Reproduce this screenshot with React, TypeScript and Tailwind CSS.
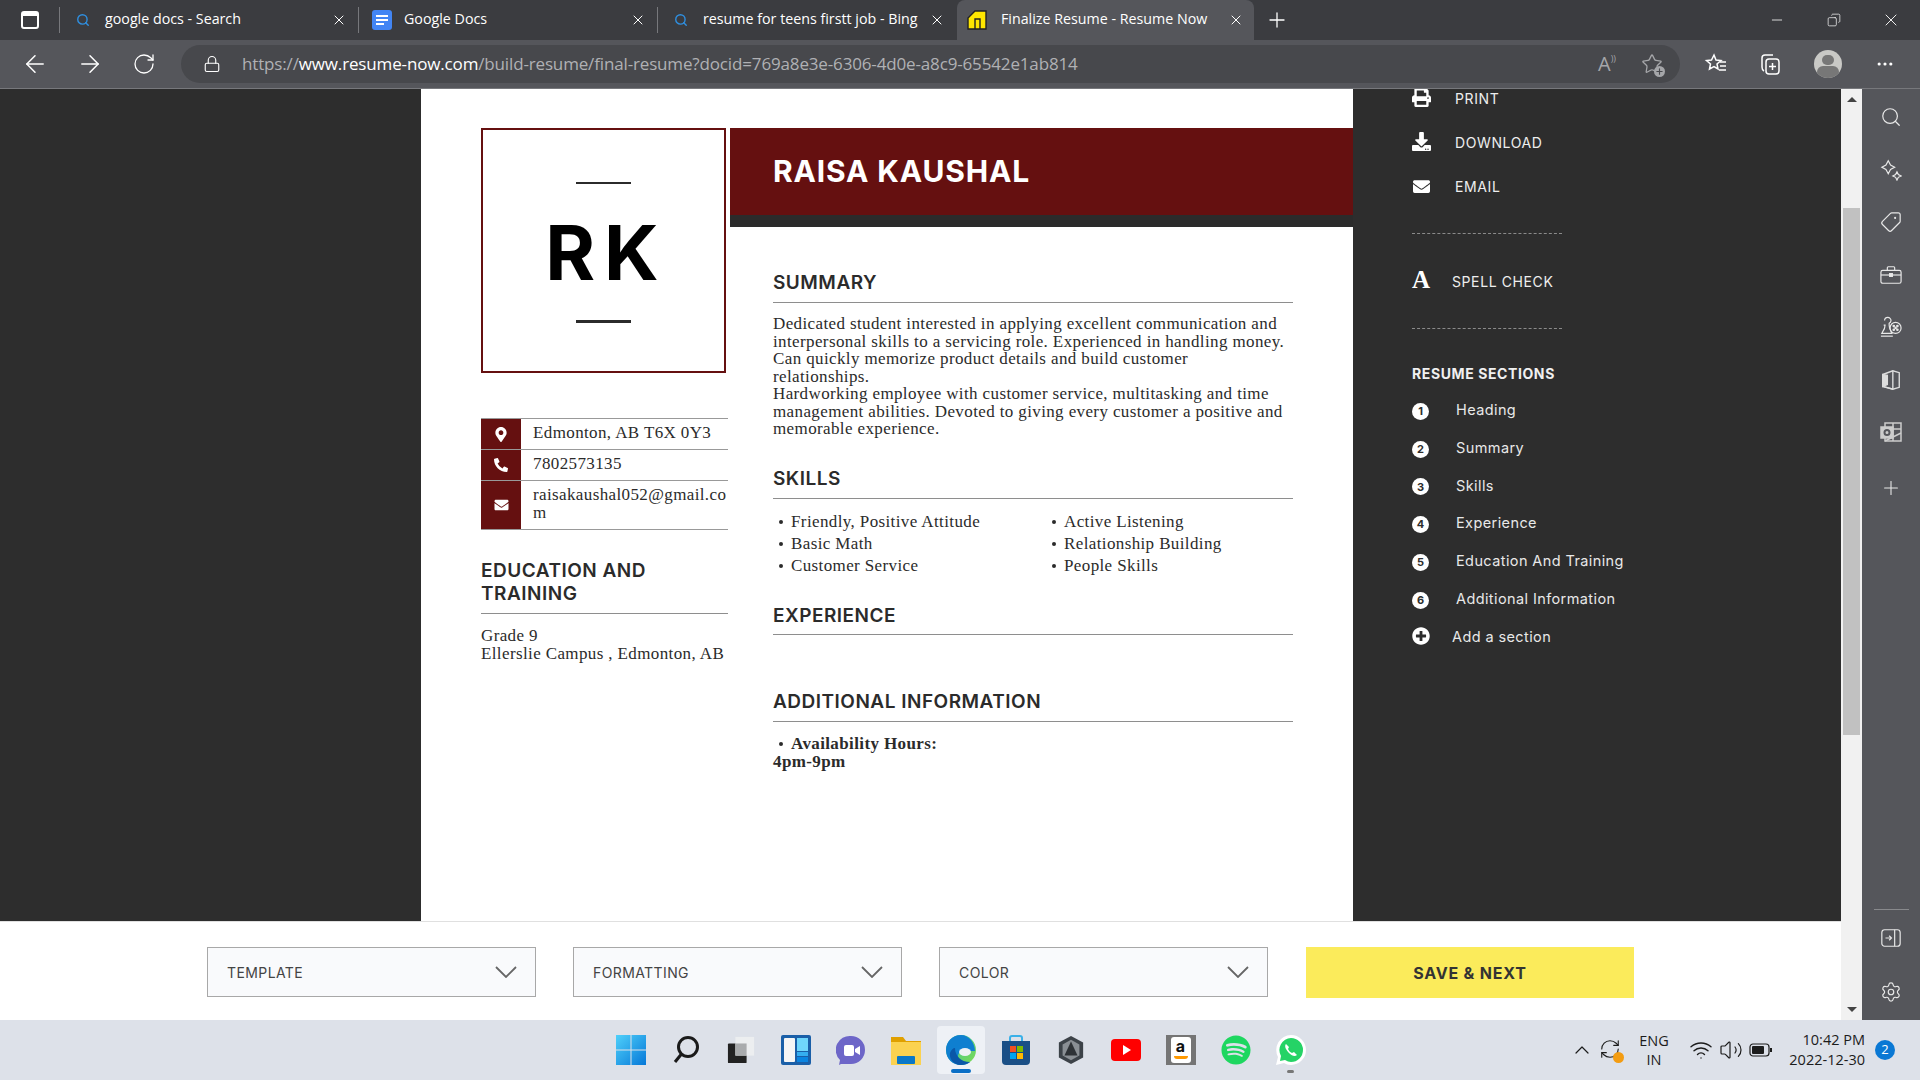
import { ArrowLeft, ArrowRight, RotateCw, Lock, X, Plus, Minus, Copy, Search, Tag, ChevronUp, Settings, Star, Wifi, Volume2, MoreHorizontal, RefreshCw } from 'lucide-react';
import { FaMapMarkerAlt, FaPhoneAlt, FaEnvelope, FaPrint, FaDownload, FaPlusCircle, FaSpotify } from 'react-icons/fa';

const serif = "font-['Liberation_Serif',serif]";
const body = "text-[17px] leading-[17.5px] tracking-[0.38px] text-[#2b2b2b] font-['Liberation_Serif',serif]";
const ui = "font-['Open_Sans',sans-serif]";
const head = "font-['Inter',sans-serif]";

function TabIcon({ kind }: { kind: string }) {
  if (kind === 'search') return <Search className="w-[14px] h-[14px] text-[#2f8fe0]" strokeWidth={2.4} />;
  if (kind === 'docs') {
    return (
      <div className="w-5 h-5 rounded-[3px] bg-[#4285f4] flex flex-col justify-center gap-[2px] px-1">
        <div className="h-[2px] bg-white" />
        <div className="h-[2px] bg-white" />
        <div className="h-[2px] bg-white w-2" />
      </div>
    );
  }
  return (
    <svg viewBox="0 0 20 20" className="w-5 h-5">
      <path d="M1 19V8l7-7h11v18z" fill="#ffe600" stroke="#222" strokeWidth="1.4" />
      <path d="M8 19V9h5v10" fill="none" stroke="#222" strokeWidth="1.4" />
    </svg>
  );
}

function Tab({ title, icon, active, divider }: { title: string; icon: string; active?: boolean; divider?: boolean }) {
  return (
    <div className={active ? 'w-[297px] h-10 flex items-center pl-[10px] pr-[10px] bg-[#55565b] rounded-t-lg' : 'w-[299px] h-10 flex items-center pl-[13px] pr-[12px] relative'}>
      <div className="w-[20px] shrink-0 flex justify-center"><TabIcon kind={icon} /></div>
      <div className={active ? 'ml-[14px] mr-[8px] -mt-[2px] flex-1' : 'ml-[12px] mr-[12px] -mt-[2px] flex-1'}>
        <div className={`whitespace-nowrap text-[14.25px] text-white ${ui}`}>{title}</div>
      </div>
      <X className="w-4 h-4 shrink-0 text-white" strokeWidth={1.5} />
      {divider && <div className="absolute right-0 top-[7px] w-px h-[26px] bg-[#77787c]" />}
    </div>
  );
}

function TabStrip() {
  return (
    <div className="h-10 bg-[#3b3c40] flex items-center">
      <div className="w-[60px] h-10 flex items-center justify-center relative">
        <div className="w-[18px] h-[18px] border-2 border-white rounded-[3px] border-t-[5px]" />
        <div className="absolute right-0 top-[7px] w-px h-[26px] bg-[#77787c]" />
      </div>
      <Tab title="google docs - Search" icon="search" divider />
      <Tab title="Google Docs" icon="docs" divider />
      <Tab title="resume for teens firstt job - Bing" icon="search" />
      <Tab title="Finalize Resume - Resume Now" icon="site" active />
      <Plus className="ml-[11px] w-6 h-6 text-white" strokeWidth={1.3} />
      <div className="ml-auto flex items-center text-white">
        <div className="w-[57px] flex justify-center"><Minus className="w-4 h-4" strokeWidth={1.2} /></div>
        <div className="w-[57px] flex justify-center"><Copy className="w-[14px] h-[14px] -scale-x-100" strokeWidth={1.2} /></div>
        <div className="w-[58px] flex justify-center"><X className="w-5 h-5" strokeWidth={1.1} /></div>
      </div>
    </div>
  );
}

function Toolbar() {
  return (
    <div className="h-[49px] bg-[#55565b] border-b border-[#77787c] flex items-center text-white">
      <div className="w-[181px] pl-[21px] flex items-center">
        <ArrowLeft className="w-7 h-7" strokeWidth={1.3} />
        <ArrowRight className="ml-[27px] w-7 h-7" strokeWidth={1.3} />
        <RotateCw className="ml-[28px] w-6 h-6" strokeWidth={1.3} />
      </div>
      <div className="w-[1499px] h-[38px] bg-[#47484c] rounded-[19px] flex items-center pl-[22px] pr-[17px]">
        <Lock className="w-[18px] h-[18px]" strokeWidth={1.5} />
        <div className={`ml-[21px] -mt-[1px] text-[17px] whitespace-nowrap text-[#b0b1b4] tracking-[-0.15px] ${ui}`}>
          https://<span className="text-white">www.resume-now.com</span>/build-resume/final-resume?docid=769a8e3e-6306-4d0e-a8c9-65542e1ab814
        </div>
        <div className="ml-auto flex items-center gap-[25px] text-[#a5a6a9]">
          <span className={`text-[20px] leading-none ${ui}`}>A<span className="text-[9px] align-top">))</span></span>
          <div className="relative">
            <Star className="w-[22px] h-[22px]" strokeWidth={1.4} />
            <div className="absolute right-[-2px] bottom-[-2px] w-[11px] h-[11px] rounded-full bg-[#a5a6a9] flex items-center justify-center">
              <Plus className="w-[9px] h-[9px] text-[#47484c]" strokeWidth={3} />
            </div>
          </div>
        </div>
      </div>
      <svg viewBox="0 0 24 24" className="ml-[24px] w-6 h-6" fill="none" stroke="white" strokeWidth="1.5">
        <path d="M10 3l2 5 5 .5-4 3.5 1 5-4-2.5L5.5 17l1-5-4-3.5L7.5 8z" />
        <path d="M16 10h6M16 14h6M15 18h7" />
      </svg>
      <svg viewBox="0 0 24 24" className="ml-[30px] w-6 h-6" fill="none" stroke="white" strokeWidth="1.5">
        <path d="M6 19c-2-1-2-2-2-4V6c0-2 1-3 3-3h8" />
        <rect x="8" y="7" width="13" height="15" rx="3" />
        <path d="M14.5 11v7M11 14.5h7" />
      </svg>
      <div className="ml-[32px] w-7 h-7 rounded-full bg-[#c9c9c6] overflow-hidden flex flex-col items-center pt-[5px]">
        <div className="w-[12px] h-[12px] rounded-full bg-[#777]" />
        <div className="w-[22px] h-[14px] rounded-full bg-[#777] mt-[1px]" />
      </div>
      <MoreHorizontal className="ml-[33px] w-5 h-5" strokeWidth={1.8} />
    </div>
  );
}

function ContactRow({ icon, children, tall }: { icon: React.ReactNode; children: React.ReactNode; tall?: boolean }) {
  return (
    <div className={tall ? 'flex h-[49px] border-b border-[#999]' : 'flex h-[31px] border-b border-[#999]'}>
      <div className="w-10 shrink-0 bg-[#651010] flex items-center justify-center text-white">{icon}</div>
      <div className={`pl-[12px] pt-[5px] break-all ${body}`}>{children}</div>
    </div>
  );
}

function Heading({ children, className }: { children: React.ReactNode; className: string }) {
  return (
    <div className={`border-b border-[#8e8e8e] font-semibold text-[19px] leading-[23px] text-[#2b2b2b] tracking-[0.5px] ${head} ${className}`}>
      {children}
    </div>
  );
}

function Bullet({ children }: { children: React.ReactNode }) {
  return (
    <div className="flex items-center h-[22px]">
      <span className="w-[4px] h-[4px] rounded-full bg-[#2b2b2b] ml-[6px] mr-[8px]" />
      {children}
    </div>
  );
}

function Resume() {
  return (
    <div className="w-[932px] h-full bg-white flex shrink-0">
      <div className="w-[309px] pl-[60px] pt-[39px] pr-[2px]">
        <div className="w-[245px] h-[245px] border-2 border-[#651010] flex flex-col items-center">
          <div className="w-[55px] h-[2px] bg-[#2b2b2b] mt-[52px]" />
          <div className={`mt-[25px] pl-[6px] text-[76px] leading-[86px] font-bold text-black tracking-[9px] ${head}`}>RK</div>
          <div className="w-[55px] h-[3px] bg-[#2b2b2b] mt-[25px]" />
        </div>
        <div className="mt-[45px] w-[247px] border-t border-[#999]">
          <ContactRow icon={<FaMapMarkerAlt className="w-[14px] h-[15px]" />}>Edmonton, AB T6X 0Y3</ContactRow>
          <ContactRow icon={<FaPhoneAlt className="w-[14px] h-[14px]" />}>7802573135</ContactRow>
          <ContactRow tall icon={<FaEnvelope className="w-[15px] h-[14px]" />}>raisakaushal052@gmail.com</ContactRow>
        </div>
        <Heading className="mt-[29px] pb-[8px] w-[247px]">EDUCATION AND TRAINING</Heading>
        <div className={`mt-[13px] ${body}`}>
          Grade 9<br />Ellerslie Campus , Edmonton, AB
        </div>
      </div>
      <div className="flex-1 pr-[60px]">
        <div className="-mr-[60px] mt-[39px] h-[99px] bg-[#651010] border-b-[12px] border-[#2b2b2b] pl-[43px] pt-[25px]">
          <div className={`text-white font-bold text-[30px] leading-[36px] tracking-[0.85px] ${head}`}>RAISA KAUSHAL</div>
        </div>
        <div className="ml-[43px]">
          <Heading className="mt-[44px] pb-[8px]">SUMMARY</Heading>
          <div className={`mt-[12px] ${body}`}>
            Dedicated student interested in applying excellent communication and<br />
            interpersonal skills to a servicing role. Experienced in handling money.<br />
            Can quickly memorize product details and build customer<br />
            relationships.<br />
            Hardworking employee with customer service, multitasking and time<br />
            management abilities. Devoted to giving every customer a positive and<br />
            memorable experience.
          </div>
          <Heading className="mt-[29px] pb-[8px]">SKILLS</Heading>
          <div className={`mt-[12px] flex ${body}`}>
            <div className="w-[273px]">
              <Bullet>Friendly, Positive Attitude</Bullet>
              <Bullet>Basic Math</Bullet>
              <Bullet>Customer Service</Bullet>
            </div>
            <div>
              <Bullet>Active Listening</Bullet>
              <Bullet>Relationship Building</Bullet>
              <Bullet>People Skills</Bullet>
            </div>
          </div>
          <Heading className="mt-[27px] pb-[7px]">EXPERIENCE</Heading>
          <Heading className="mt-[55px] pb-[8px]">ADDITIONAL INFORMATION</Heading>
          <div className={`mt-[11px] font-bold ${body}`}>
            <Bullet>Availability Hours:</Bullet>
            <div className="-mt-[2px]">4pm-9pm</div>
          </div>
        </div>
      </div>
    </div>
  );
}

function ActionRow({ icon, label, top }: { icon: React.ReactNode; label: string; top: string }) {
  return (
    <div className={`flex items-center h-[24px] ${top}`}>
      <div className="w-[20px] mr-[23px] flex">{icon}</div>
      <span className={`text-[14px] text-[#eeeeee] tracking-[0.6px] ${head}`}>{label}</span>
    </div>
  );
}

const sections = ['Heading', 'Summary', 'Skills', 'Experience', 'Education And Training', 'Additional Information'];

function SidePanel() {
  return (
    <div className="flex-1 pl-[59px] -mt-[3px]">
      <ActionRow top="" label="PRINT" icon={<FaPrint className="w-[19px] h-[19px] text-white -mt-[2px]" />} />
      <ActionRow top="mt-[20px]" label="DOWNLOAD" icon={<FaDownload className="w-[19px] h-[19px] text-white -mt-[1px]" />} />
      <ActionRow top="mt-[20px]" label="EMAIL" icon={<FaEnvelope className="w-[19px] h-[17px] text-white" />} />
      <div className="w-[150px] mt-[35px] border-t border-dashed border-[#8a8a8a]" />
      <div className="flex items-center h-[24px] mt-[35px]">
        <span className={`w-[40px] text-[25px] leading-none text-white font-bold -mt-[3px] ${serif}`}>A</span>
        <span className={`text-[14px] text-[#eeeeee] tracking-[0.6px] ${head}`}>SPELL CHECK</span>
      </div>
      <div className="w-[150px] mt-[35px] border-t border-dashed border-[#8a8a8a]" />
      <div className={`mt-[35px] text-[14px] leading-[20px] font-bold text-[#f0f0f0] tracking-[0.6px] ${head}`}>RESUME SECTIONS</div>
      <div className="mt-[7px]">
        {sections.map((s, i) => (
          <div key={s} className="h-[37.75px] flex items-center">
            <div className={`w-[17px] h-[17px] rounded-full bg-white text-[#2d2d2d] text-[11px] font-bold flex items-center justify-center mt-[3px] ${head}`}>{i + 1}</div>
            <span className={`ml-[27px] text-[14.5px] text-[#e8e8e8] tracking-[0.4px] ${head}`}>{s}</span>
          </div>
        ))}
        <div className="h-[39px] flex items-center">
          <FaPlusCircle className="w-[18px] h-[18px] text-white -mt-[2px]" />
          <span className={`ml-[22px] text-[14.5px] text-[#e8e8e8] tracking-[0.4px] ${head}`}>Add a section</span>
        </div>
      </div>
    </div>
  );
}

function Dropdown({ label }: { label: string }) {
  return (
    <div className="w-[329px] h-[50px] bg-[#f9fafc] border border-[#a8a8a8] flex items-center pl-[19px] pr-[18px]">
      <span className={`text-[14px] text-[#444] tracking-[0.4px] ${head}`}>{label}</span>
      <svg viewBox="0 0 22 12" className="ml-auto w-[22px] h-3" fill="none" stroke="#666" strokeWidth="1.8">
        <path d="M1 1l10 10L21 1" />
      </svg>
    </div>
  );
}

function BottomBar() {
  return (
    <div className="h-[99px] bg-white border-t border-[#e0e0e0] flex items-start pt-[25px] pl-[207px]">
      <Dropdown label="TEMPLATE" />
      <div className="w-[37px]" />
      <Dropdown label="FORMATTING" />
      <div className="w-[37px]" />
      <Dropdown label="COLOR" />
      <div className="w-[38px]" />
      <button className={`w-[328px] h-[51px] bg-[#fbeb5b] text-[16px] font-bold text-[#333] tracking-[0.8px] ${head}`}>SAVE &amp; NEXT</button>
    </div>
  );
}

function Scrollbar() {
  return (
    <div className="w-[21px] bg-[#f1f1f1] flex flex-col items-center shrink-0">
      <div className="h-[119px] pt-[8px]">
        <div className="w-0 h-0 border-x-[5px] border-x-transparent border-b-[5px] border-b-[#444]" />
      </div>
      <div className="w-[17px] h-[527px] bg-[#c1c1c1]" />
      <div className="mt-auto mb-[8px] w-0 h-0 border-x-[5px] border-x-transparent border-t-[5px] border-t-[#444]" />
    </div>
  );
}

function RightRail() {
  return (
    <div className="w-[58px] bg-[#55565b] flex flex-col items-center pt-[17px] text-[#e8e8e8] shrink-0">
      <div className="flex flex-col items-center gap-[30.5px]">
        <Search className="w-[22px] h-[22px]" strokeWidth={1.3} />
        <svg viewBox="0 0 24 24" className="w-[22px] h-[22px]" fill="none" stroke="currentColor" strokeWidth="1.3">
          <path d="M9 2l2.5 4.5L16 9l-4.5 2.5L9 16l-2.5-4.5L2 9l4.5-2.5z" />
          <path d="M18.5 14l1.5 3 3 1.5-3 1.5-1.5 3-1.5-3-3-1.5 3-1.5z" />
        </svg>
        <Tag className="w-[22px] h-[22px] -scale-x-100" strokeWidth={1.3} />
        <svg viewBox="0 0 24 24" className="w-[22px] h-[22px]" fill="none" stroke="currentColor" strokeWidth="1.3">
          <path d="M8 7V4q0-1 1-1h6q1 0 1 1v3" />
          <rect x="1" y="7" width="22" height="14" rx="2" />
          <path d="M1 12h22" />
          <rect x="10.5" y="10.5" width="3" height="3" fill="currentColor" />
        </svg>
        <svg viewBox="0 0 24 24" className="w-[22px] h-[22px]" fill="none" stroke="currentColor" strokeWidth="1.3">
          <path d="M5 5a3.5 3.5 0 0 1 7 0c0 1.5-1 2.5-2 3v2c0 3 1 5 2 7l1 2H2l1-2c1.5-2 2.5-4 2.5-7H4" />
          <path d="M1 22h13" />
          <circle cx="17" cy="13" r="6" />
          <circle cx="15" cy="11" r=".8" fill="currentColor" />
          <circle cx="19" cy="11" r=".8" fill="currentColor" />
          <circle cx="17" cy="13" r=".8" fill="currentColor" />
          <circle cx="15" cy="15" r=".8" fill="currentColor" />
          <circle cx="19" cy="15" r=".8" fill="currentColor" />
        </svg>
        <svg viewBox="0 0 22 24" className="w-[22px] h-[22px]" fill="none" stroke="#ddd" strokeWidth="1.5">
          <path d="M2 6l11-4 7 2v16l-7 2-11-3z" />
          <path d="M2 6v13l5-2V7z" fill="#ddd" />
          <path d="M13 2v20M2 19l11 3" />
        </svg>
        <svg viewBox="0 0 22 22" className="w-[22px] h-[22px]" fill="none" stroke="#ccc" strokeWidth="1.5">
          <rect x="5" y="2" width="16" height="18" />
          <path d="M13 2v18M13 8h8M5 20l16-8" />
          <rect x="1" y="6" width="12" height="11" fill="#ccc" />
          <circle cx="7" cy="11.5" r="2.5" stroke="#55565b" strokeWidth="2" />
        </svg>
        <Plus className="mt-[3px] w-[22px] h-[22px]" strokeWidth={1.2} />
      </div>
      <div className="mt-auto w-[35px] h-px bg-[#88898c]" />
      <svg viewBox="0 0 24 24" className="mt-[17px] w-[22px] h-[22px]" fill="none" stroke="currentColor" strokeWidth="1.3">
        <rect x="2" y="3" width="20" height="18" rx="3" />
        <path d="M16 3v18M6 12h6" />
        <path d="M10 9.5l2.5 2.5-2.5 2.5" />
      </svg>
      <Settings className="mt-[32px] mb-[17px] w-[22px] h-[22px]" strokeWidth={1.3} />
    </div>
  );
}

function TaskIcon({ children, active }: { children: React.ReactNode; active?: boolean }) {
  return (
    <div className={active ? 'w-[48px] h-[48px] mx-[3.5px] bg-[#eef1f6] rounded-[4px] flex items-center justify-center relative' : 'w-[55px] h-[48px] flex items-center justify-center relative'}>
      {children}
    </div>
  );
}

function Taskbar() {
  return (
    <div className="h-[60px] bg-[#dde1e9] flex items-center pl-[603px] text-[#1c1c1c] shrink-0">
      <TaskIcon>
        <svg viewBox="0 0 30 30" className="w-[30px] h-[30px]">
          <defs>
            <linearGradient id="win" x1="0" y1="0" x2="1" y2="1">
              <stop offset="0" stopColor="#4fd0fa" />
              <stop offset="1" stopColor="#0678d8" />
            </linearGradient>
          </defs>
          <path d="M0 0h14.5v14.5H0zM15.5 0H30v14.5H15.5zM0 15.5h14.5V30H0zM15.5 15.5H30V30H15.5z" fill="url(#win)" />
        </svg>
      </TaskIcon>
      <TaskIcon>
        <svg viewBox="0 0 30 30" className="w-[30px] h-[30px]" fill="none" stroke="#1a1a1a" strokeWidth="3">
          <circle cx="17" cy="12" r="9.5" />
          <path d="M10.5 19L4 27" />
        </svg>
      </TaskIcon>
      <TaskIcon>
        <svg viewBox="0 0 30 30" className="w-[28px] h-[30px]">
          <rect x="1" y="8" width="20" height="21" rx="1" fill="#222" />
          <rect x="9" y="1" width="20" height="20" fill="#eceef0" />
          <rect x="9" y="8" width="12" height="13" fill="#a9abad" />
        </svg>
      </TaskIcon>
      <TaskIcon>
        <svg viewBox="0 0 30 30" className="w-[30px] h-[30px]">
          <rect width="30" height="30" rx="2" fill="#1a5fa8" />
          <rect x="3" y="3" width="11" height="24" rx="1" fill="#f5f5f5" />
          <rect x="16" y="3" width="11" height="13" fill="#6fd6fb" />
          <rect x="16" y="17" width="11" height="4" fill="#35aef0" />
          <rect x="16" y="22" width="11" height="5" fill="#0a84e0" />
        </svg>
      </TaskIcon>
      <TaskIcon>
        <svg viewBox="0 0 30 30" className="w-[30px] h-[30px]">
          <path d="M15 1a14 14 0 0 1 0 28H5l-2 1 1-5A14 14 0 0 1 15 1z" fill="#6d66c8" />
          <rect x="8" y="10" width="10" height="11" rx="2" fill="#fff" />
          <path d="M19 14l5-3v9l-5-3z" fill="#fff" />
        </svg>
      </TaskIcon>
      <TaskIcon>
        <svg viewBox="0 0 30 30" className="w-[30px] h-[30px]">
          <path d="M0 2h12l3 4h15v24H0z" fill="#e0a000" />
          <rect y="7" width="30" height="23" fill="#fbd250" />
          <rect x="6" y="21" width="18" height="8" rx="1" fill="#0a78c8" />
        </svg>
      </TaskIcon>
      <TaskIcon active>
        <svg viewBox="0 0 30 30" className="w-[30px] h-[30px]">
          <defs>
            <linearGradient id="edge" x1="0" y1="0" x2="1" y2="1">
              <stop offset="0" stopColor="#35c1b0" />
              <stop offset="1" stopColor="#7fdc4c" />
            </linearGradient>
          </defs>
          <circle cx="15" cy="15" r="15" fill="url(#edge)" />
          <path d="M15 0C6 0 0 7 0 15c0 9 7 15 15 15 4 0 7-1 9-3-6 2-12-1-12-6 0-3 3-5 7-5h10C29 8 23 0 15 0z" fill="#0f7fd0" />
          <path d="M9 13c0 8 6 14 15 14-3 2-6 3-9 3-8 0-12-7-11-12 1-3 3-5 5-5z" fill="#0a57a8" />
          <ellipse cx="19" cy="17" rx="6" ry="4" fill="#eef1f6" />
        </svg>
        <div className="absolute bottom-[1px] w-[20px] h-[4px] rounded-full bg-[#0a6fc6]" />
      </TaskIcon>
      <TaskIcon>
        <svg viewBox="0 0 30 30" className="w-[30px] h-[30px]">
          <path d="M9 6V3q0-2 2-2h8q2 0 2 2v3" fill="none" stroke="#3ab0e8" strokeWidth="2" />
          <path d="M1 6h28v20q0 4-4 4H5q-4 0-4-4z" fill="#1a4f86" />
          <rect x="9" y="11" width="6" height="6" fill="#f25022" />
          <rect x="16" y="11" width="6" height="6" fill="#7fba00" />
          <rect x="9" y="18" width="6" height="6" fill="#00a4ef" />
          <rect x="16" y="18" width="6" height="6" fill="#ffb900" />
        </svg>
      </TaskIcon>
      <TaskIcon>
        <svg viewBox="0 0 30 30" className="w-[28px] h-[30px]">
          <path d="M15 0l13 7v16l-13 7-13-7V7z" fill="#3c4248" />
          <path d="M15 4l9 5v12l-9 5-9-5V9z" fill="#8a8f94" />
          <path d="M15 6l7 15H8z" fill="#2e3236" />
        </svg>
      </TaskIcon>
      <TaskIcon>
        <svg viewBox="0 0 30 22" className="w-[30px] h-[22px]">
          <rect width="30" height="22" rx="4" fill="#f00" />
          <path d="M12 6l8 5-8 5z" fill="#fff" />
        </svg>
      </TaskIcon>
      <TaskIcon>
        <div className="w-[30px] h-[30px] bg-[#757575] flex items-center justify-center">
          <div className="w-[20px] h-[26px] bg-white rounded-[3px] flex flex-col items-center">
            <span className={`text-[16px] leading-[19px] font-bold text-[#111] ${head}`}>a</span>
            <div className="w-[14px] h-[3px] rounded-b-full bg-[#f90]" />
          </div>
        </div>
      </TaskIcon>
      <TaskIcon>
        <FaSpotify className="w-[30px] h-[30px] text-[#1ed760]" />
      </TaskIcon>
      <TaskIcon>
        <svg viewBox="0 0 30 30" className="w-[30px] h-[30px]">
          <path d="M15 0a15 15 0 0 1 0 30c-3 0-5-1-7-2l-8 2 2-8A15 15 0 0 1 15 0z" fill="#fff" />
          <path d="M15 3a12 12 0 0 1 0 24c-2 0-4-1-6-2l-5 1 1-5A12 12 0 0 1 15 3z" fill="#25d366" />
          <path d="M10 9c-2 2 0 6 3 9s6 4 8 2l-3-3-2 1c-2-1-3-2-4-4l1-2z" fill="#fff" />
        </svg>
        <div className="absolute bottom-[1px] w-[7px] h-[3px] rounded-full bg-[#777]" />
      </TaskIcon>

      <ChevronUp className="ml-[252px] w-6 h-6" strokeWidth={1.2} />
      <div className="ml-[5px] w-6 h-6 relative">
        <RefreshCw className="w-[22px] h-[22px]" strokeWidth={1.2} />
        <div className="absolute right-[-1px] bottom-[-1px] w-[11px] h-[11px] rounded-full bg-[#f39c12]" />
      </div>
      <div className={`ml-[11px] w-10 text-center text-[14.5px] leading-[19px] ${ui}`}>ENG<br />IN</div>
      <Wifi className="ml-[15px] w-6 h-6" strokeWidth={1.4} />
      <Volume2 className="ml-[6px] w-6 h-6" strokeWidth={1.2} />
      <svg viewBox="0 0 24 14" className="ml-[6px] w-6 h-[14px]">
        <rect x="1" y="1" width="19" height="12" rx="3" fill="none" stroke="#1c1c1c" strokeWidth="1.2" />
        <rect x="3" y="3" width="12" height="8" rx="1" fill="#1c1c1c" />
        <rect x="21" y="5" width="2" height="4" fill="#1c1c1c" />
      </svg>
      <div className={`ml-[7px] w-[85px] text-right text-[14.5px] leading-[20px] ${ui}`}>10:42 PM<br />2022-12-30</div>
      <div className={`ml-[10px] w-5 h-5 rounded-full bg-[#0a78d4] text-white text-[13px] flex items-center justify-center ${ui}`}>2</div>
    </div>
  );
}

export default function App() {
  return (
    <div className="w-[1920px] h-[1080px] flex flex-col overflow-hidden bg-[#2d2d2d]">
      <TabStrip />
      <Toolbar />
      <div className="flex-1 flex min-h-0">
        <div className="w-[1841px] flex flex-col shrink-0">
          <div className="flex-1 flex min-h-0 overflow-hidden">
            <div className="w-[421px] shrink-0" />
            <Resume />
            <SidePanel />
          </div>
          <BottomBar />
        </div>
        <Scrollbar />
        <RightRail />
      </div>
      <Taskbar />
    </div>
  );
}
